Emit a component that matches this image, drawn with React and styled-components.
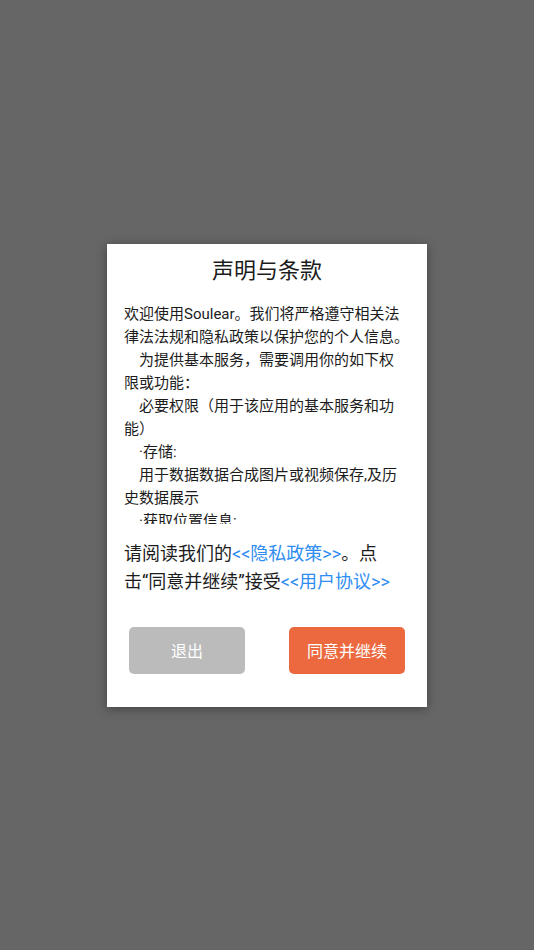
import React from 'react';
import styled, { createGlobalStyle } from 'styled-components';

const GlobalStyle = createGlobalStyle`
  html, body {
    margin: 0;
    padding: 0;
    background: #666666;
  }
  * {
    box-sizing: border-box;
  }
`;

const Backdrop = styled.div`
  width: 534px;
  height: 950px;
  display: flex;
  align-items: center;
  justify-content: center;
  background: #666666;
  font-family: Roboto, "Noto Sans CJK SC", sans-serif;
`;

const Dialog = styled.div`
  width: 320px;
  height: 463px;
  background: #ffffff;
  box-shadow: 0 2px 10px rgba(0, 0, 0, 0.35);
  display: flex;
  flex-direction: column;
  padding: 12px 0 0;
`;

const Title = styled.h2`
  margin: 0;
  font-size: 22px;
  line-height: 30px;
  font-weight: 400;
  color: #1c1c1c;
  text-align: center;
`;

const ScrollBox = styled.div`
  margin: 17px 17px 0;
  height: 221px;
  overflow: hidden;
  font-size: 15px;
  line-height: 23px;
  color: #1c1c1c;
  white-space: nowrap;
`;

const Line = styled.p`
  margin: 0;
  text-indent: ${(p) => (p.$indent ? '15px' : '0')};
`;

const Notice = styled.p`
  margin: 16px 17px 0;
  font-size: 18px;
  line-height: 28px;
  color: #1c1c1c;
  white-space: nowrap;
`;

const Link = styled.span`
  color: #2f8df2;
`;

const Actions = styled.div`
  margin-top: auto;
  padding: 0 22px 33px;
  display: flex;
  justify-content: space-between;
`;

const Button = styled.button`
  width: 116px;
  height: 47px;
  border: none;
  border-radius: 5px;
  background: ${(p) => (p.$primary ? '#ec693f' : '#bbbbbb')};
  color: #ffffff;
  font-family: Roboto, "Noto Sans CJK SC", sans-serif;
  font-size: 16px;
  cursor: pointer;
`;

export default function App() {
  return (
    <>
      <GlobalStyle />
      <Backdrop>
        <Dialog>
          <Title>声明与条款</Title>
          <ScrollBox>
            <Line>欢迎使用Soulear。我们将严格遵守相关法<br />律法法规和隐私政策以保护您的个人信息。</Line>
            <Line $indent>为提供基本服务，需要调用你的如下权<br />限或功能：</Line>
            <Line $indent>必要权限（用于该应用的基本服务和功<br />能）</Line>
            <Line $indent>·存储:</Line>
            <Line $indent>用于数据数据合成图片或视频保存,及历<br />史数据展示</Line>
            <Line $indent>·获取位置信息:</Line>
            <Line $indent>用于蓝牙设备的搜索与连接</Line>
          </ScrollBox>
          <Notice>
            请阅读我们的<Link>&lt;&lt;隐私政策&gt;&gt;</Link>。点
            <br />
            击“同意并继续”接受<Link>&lt;&lt;用户协议&gt;&gt;</Link>
          </Notice>
          <Actions>
            <Button>退出</Button>
            <Button $primary>同意并继续</Button>
          </Actions>
        </Dialog>
      </Backdrop>
    </>
  );
}
